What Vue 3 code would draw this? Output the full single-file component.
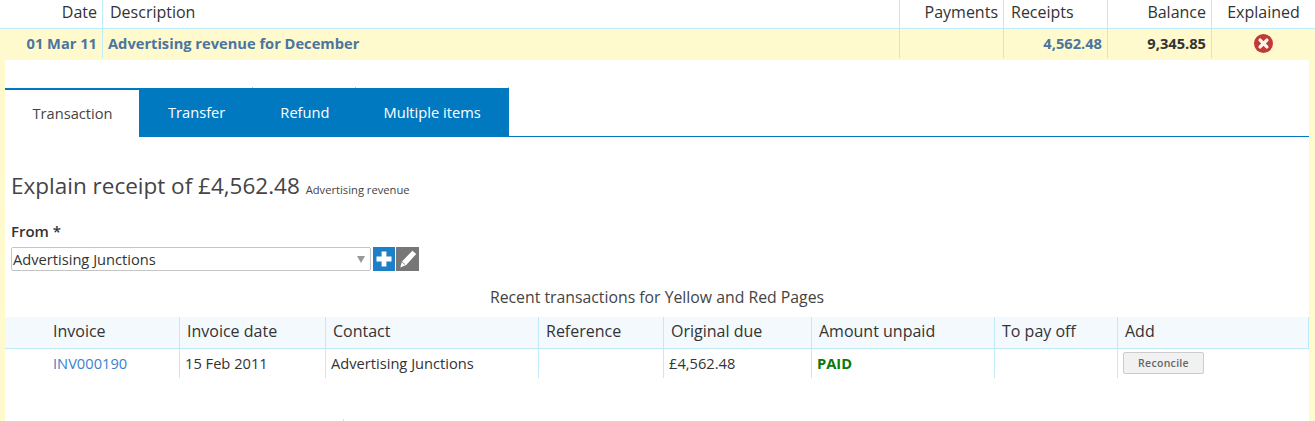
<script setup>
const heads = [
  { label: 'Invoice', cls: 'first' },
  { label: 'Invoice date' },
  { label: 'Contact' },
  { label: 'Reference' },
  { label: 'Original due' },
  { label: 'Amount unpaid' },
  { label: 'To pay off' },
  { label: 'Add' }
]
const tabs = ['Transfer', 'Refund', 'Multiple items']
</script>

<template>
  <div class="page">
    <div class="top head">
      <div class="c r">Date</div>
      <div class="c">Description</div>
      <div class="c r">Payments</div>
      <div class="c">Receipts</div>
      <div class="c r">Balance</div>
      <div class="c ctr">Explained</div>
    </div>
    <div class="top row">
      <div class="c r link">01 Mar 11</div>
      <div class="c link">Advertising revenue for December</div>
      <div class="c"></div>
      <div class="c r link">4,562.48</div>
      <div class="c r dark">9,345.85</div>
      <div class="c ctr">
        <svg width="19" height="19" viewBox="0 0 18 18" class="x">
          <circle cx="9" cy="9" r="9" fill="#c03a3a" />
          <path d="M5.8 5.8l6.4 6.4M12.2 5.8l-6.4 6.4" stroke="#fdf3e6" stroke-width="3.2" stroke-linecap="round" />
        </svg>
      </div>
    </div>
    <div class="panel">
      <div class="tabs">
        <div class="tab active">Transaction</div>
        <div class="bluetabs">
          <div v-for="t in tabs" :key="t" class="tab">{{ t }}</div>
        </div>
      </div>
      <div class="body">
        <h2 class="title">Explain receipt of £4,562.48 <small>Advertising revenue</small></h2>
        <label class="lbl">From *</label>
        <div class="selrow">
          <div class="sel">
            <span>Advertising Junctions</span>
            <i class="arrow"></i>
          </div>
          <div class="ib blue">
            <svg width="18" height="18" viewBox="0 0 18 18">
              <path d="M9 1.500v15M1.500 9h15" stroke="#fff" stroke-width="4.800" />
            </svg>
          </div>
          <div class="ib grey">
            <svg width="20" height="20" viewBox="0 0 18 18">
              <path d="M13 1.500l3.400 3-9 9.800-5.400 2.400 1.600-5.500z" fill="#fff" />
              <path d="M3.700 11.600l2.600 2.400" stroke="#777" stroke-width="0.8" />
            </svg>
          </div>
        </div>
      </div>
      <div class="recent">Recent transactions for Yellow and Red Pages</div>
      <div class="inv ihead">
        <div v-for="h in heads" :key="h.label" class="ic" :class="h.cls">{{ h.label }}</div>
      </div>
      <div class="inv irow">
        <div class="ic first"><span class="invlink">INV000190</span></div>
        <div class="ic">15 Feb 2011</div>
        <div class="ic">Advertising Junctions</div>
        <div class="ic"></div>
        <div class="ic">£4,562.48</div>
        <div class="ic paid">PAID</div>
        <div class="ic"></div>
        <div class="ic btncell"><button class="btn" type="button">Reconcile</button></div>
      </div>
      <i class="tick"></i>
    </div>
  </div>
</template>

<style>
html, body { margin: 0; background: #fff; overflow: hidden; }
</style>

<style scoped>
.page {
  width: 1315px;
  height: 421px;
  overflow: hidden;
  font-family: "Open Sans", sans-serif;
  color: #333;
  background: #fffacd;
}
.top {
  display: grid;
  grid-template-columns: 102px 797px 104px 104px 104px 104px;
}
.head {
  height: 28px;
  background: #fff;
  border-bottom: 1px solid #bfeaf7;
  font-size: 16px;
  line-height: 24px;
}
.row {
  height: 28px;
  font-size: 14.670px;
  font-weight: 700;
  line-height: 29px;
  margin-bottom: 3px;
}
.c {
  padding: 0 5px 0 7px;
  border-left: 1px solid #bfeaf7;
  white-space: nowrap;
}
.row .c { padding-left: 5px; }
.c:first-child { border-left: 0; padding-left: 0; }
.r { text-align: right; }
.ctr { text-align: center; }
.head .ctr { padding: 0; }
.link { color: #4a75a0; }
.dark { color: #333; }
.x { margin: 5px auto 0 37px; display: block; }
.panel {
  position: relative;
  margin: 0 6px 0 5px;
  height: 361px;
  background: #fff;
  padding-top: 28px;
  box-sizing: border-box;
}
.tabs {
  display: flex;
  height: 49px;
  box-sizing: border-box;
  border-bottom: 1px solid #0079c1;
  font-size: 14.670px;
}
.tab { position: relative; padding: 0 28px; line-height: 48px; white-space: nowrap; }
.bluetabs .tab:first-child { padding-left: 29px; }
.bluetabs .tab:nth-child(2) { padding: 0 26px 0 27px; }
.bluetabs .tab::after {
  content: "";
  position: absolute;
  right: 0;
  top: -1px;
  width: 1px;
  height: 1px;
  background: #9cc9e6;
}
.tab.active {
  width: 134px;
  box-sizing: border-box;
  padding: 0 0 0 1px;
  text-align: center;
  border-top: 2px solid #0079c1;
  background: #fff;
  line-height: 46px;
  height: 49px;
  color: #444;
}
.bluetabs {
  display: flex;
  height: 48px;
  background: #0079c1;
  color: #fff;
}
.body { padding: 0 6px; }
.title {
  margin: 35px 0 0;
  font-weight: 400;
  font-size: 22.500px;
  line-height: 28px;
  color: #444;
}
.title small { font-size: 11.200px; }
.lbl {
  display: block;
  margin-top: 18px;
  font-size: 15px;
  font-weight: 600;
  line-height: 18px;
}
.selrow { display: flex; margin-top: 7px; gap: 1px; height: 24px; }
.sel {
  width: 360px;
  box-sizing: border-box;
  border: 1px solid #c4c4c4;
  border-radius: 2px;
  font-size: 14.670px;
  line-height: 23px;
  padding-left: 1px;
  position: relative;
  margin-right: 1px;
  color: #333;
}
.arrow {
  position: absolute;
  right: 5px;
  top: 8px;
  border: 4px solid transparent;
  border-top: 7px solid #999;
  border-bottom: 0;
}
.ib { width: 22px; height: 24px; display: flex; align-items: center; justify-content: center; }
.blue { background: #1c7fc7; }
.grey { background: #777; width: 23px; }
.recent {
  margin-top: 16px;
  text-align: center;
  font-size: 15.800px;
  line-height: 20px;
  color: #444;
}
.inv {
  display: grid;
  grid-template-columns: 174px 146px 213px 125px 148px 183px 123px 192px;
}
.ihead {
  margin-top: 10px;
  height: 31px;
  background: #f3f9fc;
  border-bottom: 1px solid #bfeaf7;
  font-size: 16px;
  line-height: 29px;
}
.irow {
  height: 29px;
  font-size: 14.670px;
  line-height: 29px;
}
.ic { padding-left: 7px; border-left: 1px solid #bfeaf7; white-space: nowrap; }
.irow .ic { padding-left: 5px; }
.ihead .ic:last-child { border-right: 1px solid #bfeaf7; }
.ic.first, .irow .ic.first { border-left: 0; padding-left: 48px; }
.invlink { color: #3c7fd0; }
.paid { color: #0a7a0a; font-weight: 700; }
.btn {
  display: block;
  width: 81px;
  height: 22px;
  margin: 3px 0 0 0;
  padding: 0;
  border: 1px solid #ccc;
  border-radius: 2px;
  background: #f1f1f1;
  font-family: inherit;
  font-size: 10.500px;
  font-weight: 600;
  letter-spacing: 0.3px;
  color: #666;
}
.tick {
  position: absolute;
  left: 338px;
  bottom: 0;
  width: 1px;
  height: 2px;
  background: #ddd;
}
</style>
